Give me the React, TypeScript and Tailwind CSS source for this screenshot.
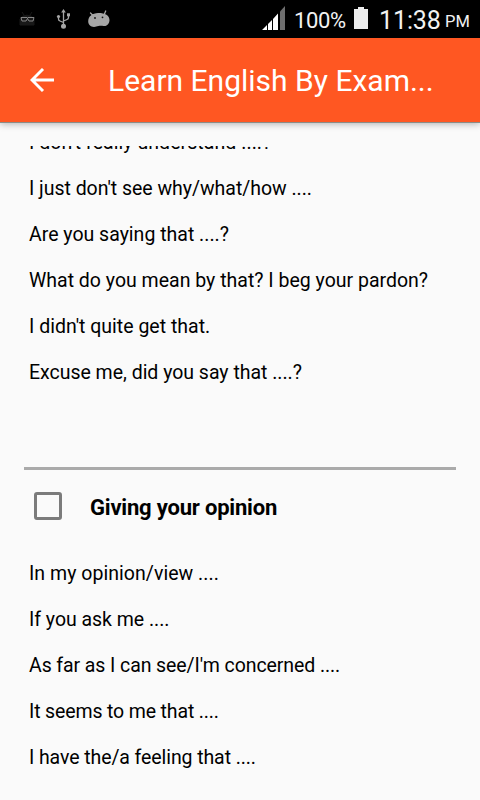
import React from "react";

type Phrase = { text: string; tracking?: string };

const clarifying: Phrase[] = [
  { text: "I don't really understand ....?", tracking: "tracking-[0.06px]" },
  { text: "I just don't see why/what/how ....", tracking: "tracking-[-0.03px]" },
  { text: "Are you saying that ....?" },
  { text: "What do you mean by that? I beg your pardon?" },
  { text: "I didn't quite get that." },
  { text: "Excuse me, did you say that ....?", tracking: "tracking-[-0.02px]" },
];

const opinions: Phrase[] = [
  { text: "In my opinion/view ....", tracking: "tracking-[0.04px]" },
  { text: "If you ask me ....", tracking: "tracking-[-0.03px]" },
  { text: "As far as I can see/I'm concerned ....", tracking: "tracking-[-0.09px]" },
  { text: "It seems to me that ....", tracking: "tracking-[-0.14px]" },
  { text: "I have the/a feeling that ....", tracking: "tracking-[-0.09px]" },
];

function Phrases({ items }: { items: Phrase[] }) {
  return (
    <ul className="pl-[5px]">
      {items.map(({ text, tracking }) => (
        <li
          key={text}
          className={`h-[46px] whitespace-nowrap text-[19.5px] leading-[48px] text-black ${tracking ?? ""}`}
        >
          {text}
        </li>
      ))}
    </ul>
  );
}

function StatusBar() {
  return (
    <div className="flex h-[38px] shrink-0 items-center bg-black text-[#f2f2f2]">
      <svg width="130" height="38" viewBox="0 0 130 38" fill="none">
        <path d="M20 25v-6a7.500 6 0 0 1 14 0v6zM22 12l2 3M32 12l-2 3" fill="#181818" stroke="#181818" strokeWidth="1" />
        <path d="M21 17.500h6l.5 1 .5-1h6l-1 3.500h-4l-1.500-2.500L26 21h-4z" stroke="#858585" strokeWidth="1" />
        <path d="M63.500 11v15M58.500 17.500V19q0 1.500 1.500 2l3.500 1.500M68.500 15v2.500q0 1.500-1.500 2l-3.500 1.500" stroke="#a6a6a6" strokeWidth="1.300" />
        <path d="M63.500 9l-2.300 3.500h4.600z" fill="#a6a6a6" />
        <circle cx="63.500" cy="26.300" r="2.500" fill="#a6a6a6" />
        <circle cx="58.500" cy="16.500" r="1.600" fill="#a6a6a6" />
        <path d="M67 13.300h3v3h-3z" fill="#a6a6a6" />
        <path d="M88.200 21.500c0-5 4-8.500 10-8.500 7 0 11.300 2.500 11.300 7 0 4-3 6.500-6 6-2-.2-3-.3-5 0-2 .3-2.500.9-4.500.9-3.500 0-5.800-2.400-5.800-5.400z" fill="#a6a6a6" />
        <path d="M90.500 13l3 3M105.700 11l-1.700 4" stroke="#a6a6a6" strokeWidth="1.300" strokeLinecap="round" />
        <circle cx="95" cy="18" r="0.9" fill="#111" />
        <circle cx="102.500" cy="17.300" r="0.9" fill="#111" />
      </svg>
      <svg className="ml-[132px]" width="23" height="38" viewBox="0 0 23 38">
        <path d="M0 30L5 25V30zM6 30V24L10 20V30zM11 30V19L16 13.500V30z" fill="#fff" />
        <path d="M18 11.500L23 6V30H18z" fill="#6e6e6e" />
      </svg>
      <span className="ml-[9px] w-[60px] whitespace-nowrap pt-[3px] text-[22px] leading-none tracking-[-0.4px]">100%</span>
      <svg width="14" height="38" viewBox="0 0 14 38">
        <path d="M0 9h4V7h6v2h4v20H0z" fill="#ededed" />
      </svg>
      <span className="ml-[11px] w-[62px] whitespace-nowrap pt-[2px] text-[25px] leading-none tracking-[-0.1px]">11:38</span>
      <span className="ml-[4px] whitespace-nowrap pt-[6px] text-[16.5px] leading-none">PM</span>
    </div>
  );
}

export default function App() {
  return (
    <div className="flex h-[800px] w-[480px] flex-col overflow-hidden bg-[#fafafa] font-[Roboto,sans-serif]">
      <StatusBar />
      <header className="flex h-[84px] shrink-0 items-center bg-[#ff5722] text-white shadow-[0_1px_0_#8b8b86,0_2px_7px_rgba(0,0,0,0.3)]">
        <svg className="ml-[30px]" width="24" height="24" viewBox="0 0 24 24" fill="none" stroke="#fff" strokeWidth="2.900">
          <path d="M24 12H2M13 1L2 12L13 23" />
        </svg>
        <h1 className="ml-[54px] whitespace-nowrap text-[30px]">Learn English By Exam...</h1>
      </header>
      <main className="mt-6 flex h-[654px] flex-col overflow-hidden px-[24px]">
        <div className="-mt-[27px]">
          <Phrases items={clarifying} />
        </div>
        <hr className="mt-[72px] h-[3px] shrink-0 border-0 bg-[#aaa]" />
        <div className="mb-2 flex h-[72px] shrink-0 items-center pl-[10px]">
          <span className="h-[28px] w-[28px] rounded-[3px] border-[3px] border-[#7b7b7b]" />
          <h2 className="ml-[28px] whitespace-nowrap pt-[2px] text-[22px] font-bold tracking-[-0.2px] text-black">Giving your opinion</h2>
        </div>
        <Phrases items={opinions} />
      </main>
    </div>
  );
}
